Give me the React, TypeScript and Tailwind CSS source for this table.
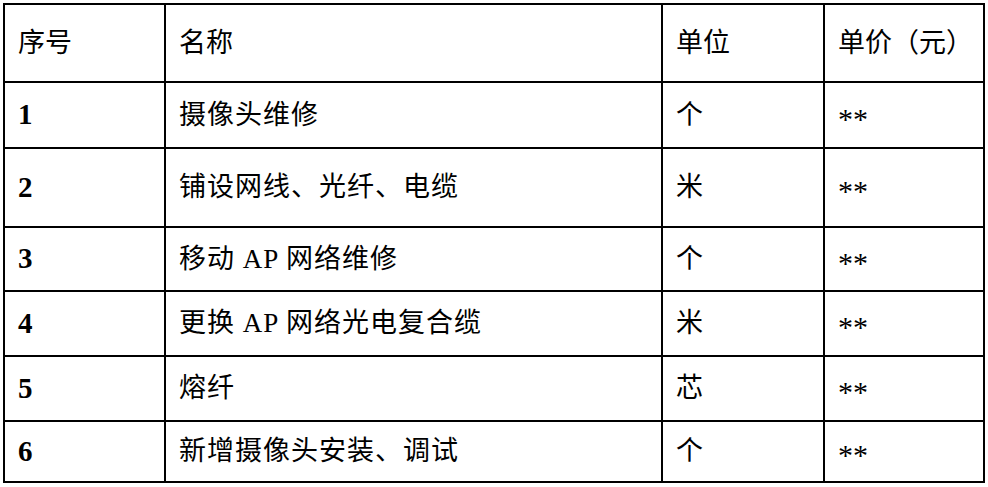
type Row = {
  no: string;
  name: string;
  unit: string;
  price: string;
  height: string;
};

const rows: Row[] = [
  { no: "1", name: "摄像头维修", unit: "个", price: "**", height: "h-[66px]" },
  { no: "2", name: "铺设网线、光纤、电缆", unit: "米", price: "**", height: "h-[79px]" },
  { no: "3", name: "移动 AP 网络维修", unit: "个", price: "**", height: "h-[64px]" },
  { no: "4", name: "更换 AP 网络光电复合缆", unit: "米", price: "**", height: "h-[65px]" },
  { no: "5", name: "熔纤", unit: "芯", price: "**", height: "h-[65px]" },
  { no: "6", name: "新增摄像头安装、调试", unit: "个", price: "**", height: "h-[61px]" }
];

const cell = "border-2 border-black pl-[13px] text-left align-middle";

export default function App() {
  return (
    <div className="h-[487px] w-[988px] bg-white pl-[3px] pt-[3px] font-['Liberation_Serif','Noto_Sans_CJK_SC',serif] text-[27px] text-black">
      <table className="table-fixed border-collapse">
        <colgroup>
          <col className="w-[161px]" />
          <col className="w-[497px]" />
          <col className="w-[162px]" />
          <col className="w-[160px]" />
        </colgroup>
        <thead>
          <tr className="h-[78px]">
            <th className={`${cell} font-normal`}>序号</th>
            <th className={`${cell} font-normal`}>名称</th>
            <th className={`${cell} font-normal`}>单位</th>
            <th className={`${cell} font-normal`}>单价（元）</th>
          </tr>
        </thead>
        <tbody>
          {rows.map((row) => (
            <tr className={row.height} key={row.no}>
              <td className={`${cell} pl-[11px] text-[29px] font-bold`}>{row.no}</td>
              <td className={`${cell} tracking-[1px]`}>{row.name}</td>
              <td className={cell}>{row.unit}</td>
              <td className={`${cell} text-[30px] font-normal`}>
                <span className="inline-block translate-y-[3px]">{row.price}</span>
              </td>
            </tr>
          ))}
        </tbody>
      </table>
    </div>
  );
}
